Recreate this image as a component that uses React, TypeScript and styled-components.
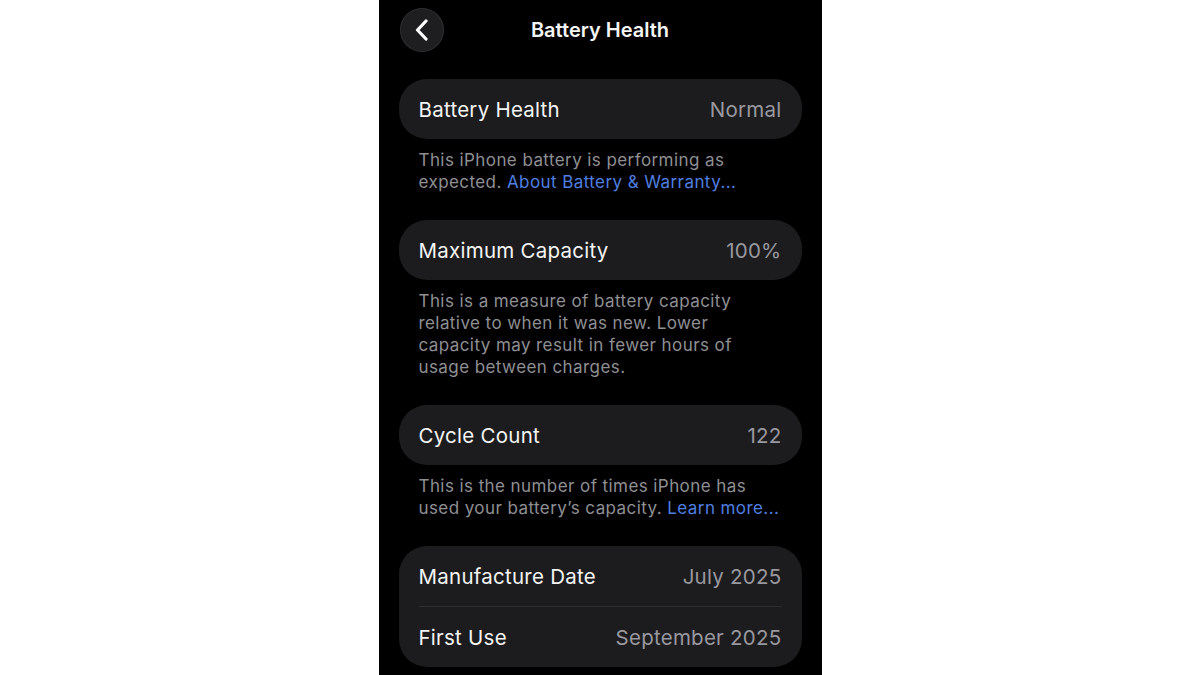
import React from 'react'
import styled, { createGlobalStyle } from 'styled-components'

const GlobalStyle = createGlobalStyle`
  html, body {
    margin: 0;
    padding: 0;
    background: #ffffff;
  }
  body {
    font-family: Inter, "Noto Sans", "Liberation Sans", sans-serif;
  }
`

const Page = styled.div`
  width: 100%;
  height: 675px;
  overflow: hidden;
  display: flex;
  justify-content: center;
`

const Screen = styled.div`
  width: 443px;
  height: 675px;
  background: #000000;
  padding: 0 20px;
  box-sizing: border-box;
  color: #f2f2f2;
`

const Header = styled.div`
  position: relative;
  height: 60px;
  padding-top: 8px;
  margin-bottom: 11px;
  display: flex;
  align-items: flex-start;
  justify-content: center;
`

const BackButton = styled.div`
  position: absolute;
  left: 1px;
  top: 8px;
  width: 44px;
  height: 44px;
  border-radius: 50%;
  background: #1e1e20;
  box-shadow: inset 0 0 0 1px #2c2c2e;
  display: flex;
  align-items: center;
  justify-content: center;
`

const Title = styled.div`
  font-size: 20px;
  font-weight: 600;
  line-height: 44px;
  color: #f5f5f5;
`

const Card = styled.div`
  background: #1c1c1e;
  border-radius: 28px;
  padding: 0 20px;
`

const Row = styled.div<{ $divider?: boolean }>`
  height: 60px;
  display: flex;
  align-items: center;
  justify-content: space-between;
  font-size: 20.5px;
  letter-spacing: 0.25px;
  border-top: ${({ $divider }) => ($divider ? '1px solid #2e2e31' : 'none')};
`

const Label = styled.span`
  color: #f4f4f4;
`

const Value = styled.span`
  color: #98989e;
`

const Footnote = styled.p`
  margin: 0;
  padding: 10px 20px 27px;
  font-size: 17px;
  line-height: 22px;
  color: #8f8f94;
  letter-spacing: 0.42px;
  white-space: nowrap;
`

const Link = styled.span`
  color: #4f7fe3;
`

const App: React.FC = () => {
  return (
    <>
      <GlobalStyle />
      <Page>
        <Screen>
          <Header>
            <BackButton>
              <svg width="16" height="22" viewBox="0 0 16 22" fill="none">
                <path d="M12 2 L3.5 11 L12 20" stroke="#ffffff" strokeWidth="3.2" strokeLinecap="round" strokeLinejoin="round" />
              </svg>
            </BackButton>
            <Title>Battery Health</Title>
          </Header>

          <Card>
            <Row>
              <Label>Battery Health</Label>
              <Value>Normal</Value>
            </Row>
          </Card>
          <Footnote>
            This iPhone battery is performing as
            <br />
            expected. <Link>About Battery &amp; Warranty...</Link>
          </Footnote>

          <Card>
            <Row>
              <Label>Maximum Capacity</Label>
              <Value>100%</Value>
            </Row>
          </Card>
          <Footnote>
            This is a measure of battery capacity
            <br />
            relative to when it was new. Lower
            <br />
            capacity may result in fewer hours of
            <br />
            usage between charges.
          </Footnote>

          <Card>
            <Row>
              <Label>Cycle Count</Label>
              <Value>122</Value>
            </Row>
          </Card>
          <Footnote>
            This is the number of times iPhone has
            <br />
            used your battery’s capacity. <Link>Learn more...</Link>
          </Footnote>

          <Card>
            <Row>
              <Label>Manufacture Date</Label>
              <Value>July 2025</Value>
            </Row>
            <Row $divider>
              <Label>First Use</Label>
              <Value>September 2025</Value>
            </Row>
          </Card>
        </Screen>
      </Page>
    </>
  )
}

export default App
